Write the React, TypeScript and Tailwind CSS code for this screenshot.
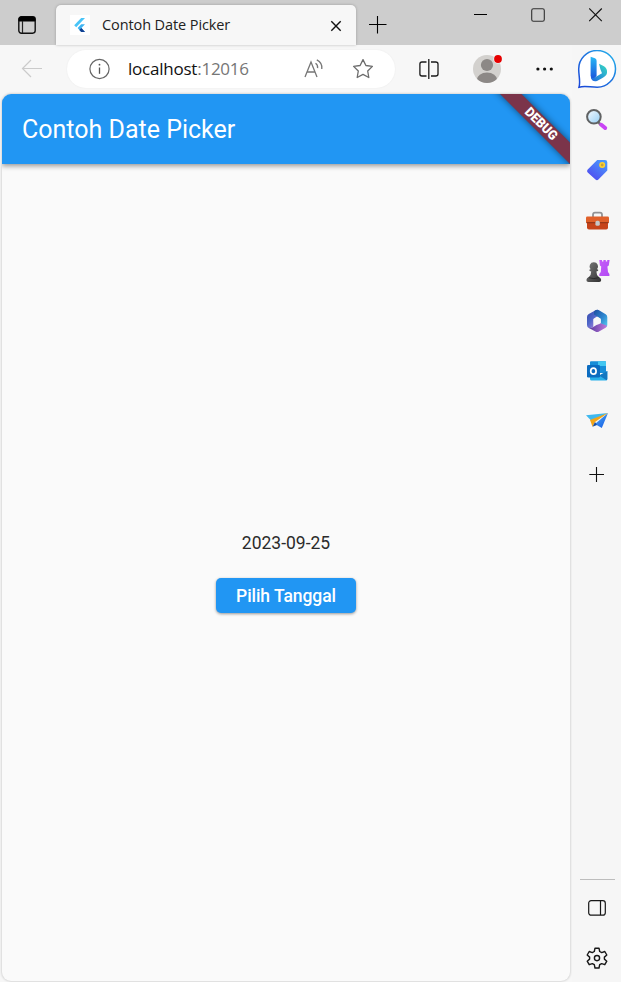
import React from "react";

type ArtProps = { w: number; h: number; className?: string; children: React.ReactNode };

function Art({ w, h, className = "", children }: ArtProps) {
  return (
    <svg width={w} height={h} viewBox={`0 0 ${w} ${h}`} fill="none" className={`block shrink-0 ${className}`}>
      {children}
    </svg>
  );
}

function TitleBar() {
  return (
    <header className="flex h-[45px] w-full items-end bg-[#cdcdcd]">
      <div className="flex h-[45px] w-[56px] shrink-0 items-start pl-[18px] pt-[16px]">
        <Art w={18} h={18}>
          <rect x="0.8" y="0.8" width="16.4" height="16.4" rx="2.6" stroke="#111" strokeWidth="1.4" />
          <path d="M1 5V3Q1 1 3 1H15Q17 1 17 3V5Z" fill="#000" stroke="#000" />
          <path d="M4.5 5V17" stroke="#222" strokeWidth="1.2" />
        </Art>
      </div>
      <div className="flex h-[40px] w-[300px] shrink-0 items-center rounded-t-[5px] bg-[#f7f7f7] shadow-[0_0_3px_rgba(0,0,0,0.25)]">
        <Art w={20} h={20} className="ml-[14px] bg-white">
          <path d="M4.2 10.2L11.2 3H15L6.2 12.2Z" fill="#48c4f7" />
          <path d="M11.2 9.2L7.6 13L11.2 17H15L11.4 13L15 9.2Z" fill="#3fb4f2" />
          <path d="M9.4 15L11.4 13L15 17H11.2Z" fill="#123f91" />
        </Art>
        <span className="ml-[12px] whitespace-nowrap font-['Open_Sans',sans-serif] text-[14.5px] leading-[20px] tracking-[-0.1px] text-[#222]">
          Contoh Date Picker
        </span>
        <Art w={12} h={12} className="ml-auto mr-[14px] mt-[2px]">
          <path d="M1.3 1.3L10.7 10.7M10.7 1.3L1.3 10.7" stroke="#111" strokeWidth="1.4" />
        </Art>
      </div>
      <div className="flex h-[45px] flex-1 items-start pl-[13px]">
        <Art w={18} h={18} className="mt-[16px]">
          <path d="M0 8.5H17.5M8.5 0V17.5" stroke="#000" strokeWidth="1.1" />
        </Art>
        <Art w={14} h={14} className="ml-[87px] mt-[8px]">
          <path d="M0 6.5H13" stroke="#000" />
        </Art>
        <Art w={14} h={14} className="ml-[43px] mt-[8px]">
          <rect x="0.7" y="0.7" width="12.6" height="12.6" rx="1.8" stroke="#303030" strokeWidth="1.1" />
        </Art>
        <Art w={14} h={14} className="ml-[44px] mt-[8px]">
          <path d="M0.2 0.5L12.8 13.1M12.8 0.5L0.2 13.1" stroke="#111" strokeWidth="1.1" />
        </Art>
      </div>
    </header>
  );
}

function Toolbar() {
  return (
    <div className="flex h-[49px] items-start">
      <Art w={22} h={20} className="ml-[21px] mt-[14px]">
        <path d="M21 9.5H1.5M10 1L1.5 9.5L10 18" stroke="#cbcbcb" strokeWidth="1.2" />
      </Art>
      <div className="ml-[24px] mt-[5px] flex h-[38px] w-[328px] items-center rounded-full bg-white shadow-[0_0_2px_rgba(0,0,0,0.06)]">
        <Art w={22} h={22} className="ml-[21px]">
          <circle cx="11.5" cy="11" r="9.6" stroke="#666" strokeWidth="1.2" />
          <path d="M11.5 9.5V15.8" stroke="#555" strokeWidth="1.3" />
          <circle cx="11.5" cy="6.7" r="0.9" fill="#555" />
        </Art>
        <span className="ml-[18px] w-[121px] whitespace-nowrap font-['Open_Sans',sans-serif] text-[17px] leading-[24px] tracking-[-0.23px] text-[#111]">
          localhost<span className="text-[#767676]">:12016</span>
        </span>
        <Art w={21} h={20} className="ml-[55px]">
          <path d="M1 18L7 3L13 18M3 13H11" stroke="#767676" strokeWidth="1.3" />
          <path d="M11.5 4.3Q14 6 13.6 9.2M12.8 0.9Q18.6 3.8 17.8 10" stroke="#767676" strokeWidth="1.3" />
        </Art>
        <Art w={22} h={22} className="ml-[27px]">
          <path d="M11 1.6L13.9 7.5L20.4 8.4L15.7 13L16.8 19.5L11 16.4L5.2 19.5L6.3 13L1.6 8.4L8.1 7.5Z" stroke="#6c6c6c" strokeWidth="1.3" strokeLinejoin="round" />
        </Art>
      </div>
      <Art w={22} h={22} className="ml-[23px] mt-[13px]">
        <path d="M8.5 4H4Q1.9 4 1.9 6V16Q1.9 18 4 18H8.5M13 4H17.7Q20 4 20 6V16Q20 18 17.7 18H13" stroke="#1a1a1a" strokeWidth="1.3" />
        <path d="M10.8 1V21" stroke="#1a1a1a" strokeWidth="1.3" />
      </Art>
      <Art w={30} h={30} className="ml-[33px] mt-[9px]">
        <defs>
          <clipPath id="avatar"><circle cx="14" cy="15" r="14" /></clipPath>
        </defs>
        <circle cx="14" cy="15" r="14" fill="#d3d1ce" />
        <circle cx="14" cy="11" r="6.1" fill="#8c8886" />
        <ellipse cx="14" cy="26" rx="10.2" ry="7.4" fill="#8c8886" clipPath="url(#avatar)" />
        <circle cx="25" cy="5" r="4.6" fill="#f7f7f7" />
        <circle cx="25" cy="5" r="3.9" fill="#e60000" />
      </Art>
      <Art w={18} h={4} className="ml-[33px] mt-[22px]">
        <circle cx="1.9" cy="2" r="1.6" fill="#111" />
        <circle cx="8.6" cy="2" r="1.6" fill="#111" />
        <circle cx="15.3" cy="2" r="1.6" fill="#111" />
      </Art>
    </div>
  );
}

function DebugBanner() {
  return (
    <Art w={90} h={70} className="ml-auto">
      <defs>
        <filter id="bandShadow" x="-20%" y="-20%" width="140%" height="140%">
          <feGaussianBlur stdDeviation="3.5" />
        </filter>
      </defs>
      <path d="M0 -20H22L110 68V90Z" fill="#000" opacity="0.5" filter="url(#bandShadow)" />
      <path d="M20 0H41.5L90 48.5V70Z" fill="#7b344a" />
      <text transform="translate(61.5 29.5) rotate(45)" textAnchor="middle" y="4.7" fill="#fff" fontFamily="Roboto, sans-serif" fontSize="13.2" fontWeight="900" textLength="40" lengthAdjust="spacingAndGlyphs">
        DEBUG
      </text>
    </Art>
  );
}

function PagePreview() {
  return (
    <main className="ml-[2px] flex h-[887px] w-[567.5px] flex-col overflow-hidden rounded-[9px] bg-[#fafafa] shadow-[0_0_2px_1px_rgba(0,0,0,0.12)]">
      <div className="z-10 flex h-[70px] shrink-0 items-center bg-[#2196f3] pl-[20px] shadow-[0_2px_5px_rgba(0,0,0,0.4)]">
        <h1 className="whitespace-nowrap pt-[2px] font-[Roboto,sans-serif] text-[25px] leading-[30px] font-normal text-white">Contoh Date Picker</h1>
        <DebugBanner />
      </div>
      <div className="flex flex-1 flex-col items-center pt-[369px] pl-[0.5px] font-[Roboto,sans-serif] text-[17.5px] leading-[20px]">
        <p className="text-[#2b2b2b]">2023-09-25</p>
        <button className="mt-[25px] h-[35px] w-[140px] rounded-[5px] bg-[#2196f3] font-medium tracking-[-0.06px] whitespace-nowrap text-white shadow-[0_1px_3px_rgba(0,0,0,0.4)]">
          Pilih Tanggal
        </button>
      </div>
    </main>
  );
}

function Sidebar() {
  return (
    <aside className="flex h-[937px] w-[49px] shrink-0 flex-col items-center bg-[#f6f6f6]">
      <Art w={40} h={40} className="mt-[5px]">
        <defs>
          <linearGradient id="bubble" x1="0" y1="1" x2="1" y2="0">
            <stop stopColor="#1946d8" /><stop offset="0.55" stopColor="#1d75df" /><stop offset="1" stopColor="#24b9ee" />
          </linearGradient>
          <linearGradient id="bing" x1="0" y1="0" x2="0" y2="1">
            <stop stopColor="#27b9f5" /><stop offset="1" stopColor="#174fda" />
          </linearGradient>
          <linearGradient id="bingTail" x1="0" y1="1" x2="1" y2="0">
            <stop stopColor="#1e65e3" /><stop offset="1" stopColor="#37dfc1" />
          </linearGradient>
        </defs>
        <path d="M2 37.2C3.7 32 1.7 26 1.7 19A18.4 18.4 0 1 1 20.2 37.3C13 37.3 8 35.5 2 37.2Z" fill="#fff" stroke="url(#bubble)" strokeWidth="1.5" />
        <path d="M13.6 6.8L18 8.3Q19.6 9 19.6 10.8V26L15.8 30Q13.6 28.5 13.6 25.5Z" fill="url(#bing)" />
        <path d="M22 13.7L27 16.3Q30.5 18.5 30 23Q29.5 26 25 28.3L20 31Q15.5 32.5 13.8 27.5Q16 29 19 26.8L25 23.3L23.4 19.2Z" fill="url(#bingTail)" />
      </Art>
      <Art w={24} h={24} className="mt-[18px]">
        <defs><linearGradient id="glass" x2="1" y2="1"><stop stopColor="#f6fbff" /><stop offset="1" stopColor="#93cef5" /></linearGradient></defs>
        <path d="M13 14L16 17" stroke="#777" strokeWidth="2.5" />
        <path d="M16.3 16.8L20.2 20" stroke="#c944f5" strokeWidth="4" strokeLinecap="round" />
        <circle cx="8.9" cy="8.8" r="6.8" fill="url(#glass)" stroke="#606263" strokeWidth="2" />
      </Art>
      <Art w={24} h={24} className="mt-[26px]">
        <defs><linearGradient id="tag" x1="1" y1="0" x2="0.2" y2="1"><stop stopColor="#49a2ff" /><stop offset="1" stopColor="#5148ef" /></linearGradient></defs>
        <path d="M12.2 2H20Q22.3 2 22.3 4.3V12.5L13.4 21.5Q12 23 10.5 21.5L2.7 14.5Q1.3 13 2.7 11.5Z" fill="url(#tag)" />
        <circle cx="17.2" cy="7" r="2.2" stroke="#ffd42a" strokeWidth="1.6" fill="#c9a040" />
      </Art>
      <Art w={24} h={22} className="mt-[28px]">
        <path d="M8 7V4.7Q8 2.7 10 2.7H15Q17 2.7 17 4.7V7" stroke="#929294" strokeWidth="1.8" />
        <rect x="1" y="6.5" width="23" height="6.8" rx="1.3" fill="#e0602a" />
        <path d="M2 12.8H23V17.5Q23 19.5 21.2 19.5H4Q2 19.5 2 17.5Z" fill="#c6441a" />
        <path d="M1.5 12.7H23.5" stroke="#802c12" strokeWidth="0.9" />
        <rect x="10.4" y="10.8" width="4.4" height="5" rx="1.6" fill="#c6c7c8" />
      </Art>
      <Art w={26} h={26} className="mt-[26px]">
        <defs>
          <linearGradient id="pawn" x2="1" y2="1"><stop stopColor="#7c7c7c" /><stop offset="1" stopColor="#303030" /></linearGradient>
          <linearGradient id="rook" y2="1"><stop stopColor="#c65cf8" /><stop offset="1" stopColor="#b14bf4" /></linearGradient>
        </defs>
        <path d="M15.3 2H18V3.6H19.4V2H21.8V3.6H23.2V2H25.6L24.8 7.4L23.4 8.5L24 14L25.4 16V18H15.3V16L16.8 14L17.2 8.5L15.9 7.4Z" fill="url(#rook)" />
        <path d="M9.8 4.2A4.2 4.2 0 0 1 13 11.2Q14.3 11.4 14.3 12.3Q14.3 13.4 12.4 13.5Q12.4 17 14.6 18.8Q17.2 20 17.2 22Q17.2 24.1 15.2 24.1H4.5Q2.4 24.1 2.4 22Q2.4 20 5 18.8Q7.2 17 7.2 13.5Q5.3 13.4 5.3 12.3Q5.3 11.4 6.6 11.2A4.2 4.2 0 0 1 9.8 4.2Z" fill="url(#pawn)" />
        <path d="M4.8 19.7Q9.8 21.5 14.8 19.7" stroke="#222" strokeWidth="0.8" />
      </Art>
      <Art w={24} h={24} className="mt-[25px]">
        <defs>
          <linearGradient id="loopA" x2="0.8" y2="1"><stop stopColor="#3446a7" /><stop offset="0.5" stopColor="#4e66c8" /><stop offset="1" stopColor="#ad82df" /></linearGradient>
          <linearGradient id="loopB" x2="1" y2="1"><stop stopColor="#1c4c9f" /><stop offset="0.55" stopColor="#2e87d0" /><stop offset="1" stopColor="#58cdf0" /></linearGradient>
          <linearGradient id="loopC" x2="1"><stop stopColor="#54379c" /><stop offset="1" stopColor="#bd78db" /></linearGradient>
        </defs>
        <path d="M11 1L3.8 5Q2 6 2 8V16Q2 18.3 4 19Q6 19.5 8.3 18V10L14 6.3V2Q13 0 11 1Z" fill="url(#loopA)" />
        <path d="M10.5 1.2Q12.5 0.3 14 1.3L20.7 5.3Q22.3 6.3 22.3 8.3V16Q22.3 17.3 21.2 18L15.8 14.5V9.8L9 5.6V3Q9 1.8 10.5 1.2Z" fill="url(#loopB)" />
        <path d="M3 18.6Q5.5 19.6 8.3 17.9L14.7 14L21.7 16.4Q21.8 18 20.6 18.8L14 22.6Q12.3 23.6 10.4 22.6Z" fill="url(#loopC)" />
        <circle cx="12.2" cy="12" r="3.5" fill="#f7f7f7" />
      </Art>
      <Art w={24} h={24} className="mt-[26px]">
        <path d="M6 2.2H20.2Q21 2.2 21 3V14H5V3Q5 2.2 6 2.2Z" fill="#168dd8" />
        <path d="M13 2.2H20.2Q21 2.2 21 3V7H13Z" fill="#43c7f1" />
        <path d="M5 7H13V14H5Z" fill="#1469b5" />
        <path d="M5 12L14 17L22.3 12V20Q22.3 21.5 20.8 21.5H6.5Q5 21.5 5 20Z" fill="#28b0e9" />
        <path d="M14 16.5L22.3 12V20Q22.3 20.8 21.7 21.3Z" fill="#1277c1" />
        <rect x="2" y="6" width="13" height="12.5" rx="1.2" fill="#0b6cc0" />
        <ellipse cx="8.4" cy="12.2" rx="2.7" ry="3" stroke="#fff" strokeWidth="1.7" />
      </Art>
      <Art w={24} h={22} className="mt-[28px]">
        <defs><linearGradient id="plane" x2="0.8" y2="1"><stop stopColor="#4caaf0" /><stop offset="1" stopColor="#1960e8" /></linearGradient></defs>
        <path d="M1 4.3L23 2L7 10.5Z" fill="#3fb8ee" />
        <path d="M23 2L16.8 17L10 13Z" fill="url(#plane)" />
        <path d="M23 2L5 9L7.5 15.7L10 11Z" fill="#f3a517" />
        <path d="M10 11L7.5 15.7L12 13.9Z" fill="#174ba2" />
      </Art>
      <Art w={16} h={16} className="mt-[34px]">
        <path d="M.3 7.5H15M7.5 0V15" stroke="#111" strokeWidth="1.1" />
      </Art>
      <div className="ml-[2px] mt-[396px] h-px w-[35px] shrink-0 bg-[#bdbdbd]" />
      <Art w={18} h={16} className="mt-[20px]">
        <rect x="0.7" y="0.7" width="16.6" height="14.5" rx="2.5" stroke="#171717" strokeWidth="1.2" />
        <path d="M12.5 1V15" stroke="#171717" strokeWidth="1.2" />
      </Art>
      <Art w={22} h={22} className="mt-[31px]">
        <path d="M9 1.2H13L13.7 4.5L15.7 5.6L18.8 4.5L20.8 8L18.4 10.1V12.1L20.8 14.2L18.8 17.7L15.7 16.6L13.7 17.7L13 21H9L8.3 17.7L6.3 16.6L3.2 17.7L1.2 14.2L3.6 12.1V10.1L1.2 8L3.2 4.5L6.3 5.6L8.3 4.5Z" stroke="#171717" strokeWidth="1.4" strokeLinejoin="round" />
        <circle cx="11" cy="11.1" r="2.6" stroke="#171717" strokeWidth="1.4" />
      </Art>
    </aside>
  );
}

export default function App() {
  return (
    <div className="flex h-[982px] w-[621px] flex-col overflow-hidden bg-[#f7f7f7]">
      <TitleBar />
      <div className="flex">
        <div className="flex w-[572px] shrink-0 flex-col">
          <Toolbar />
          <PagePreview />
        </div>
        <Sidebar />
      </div>
    </div>
  );
}
